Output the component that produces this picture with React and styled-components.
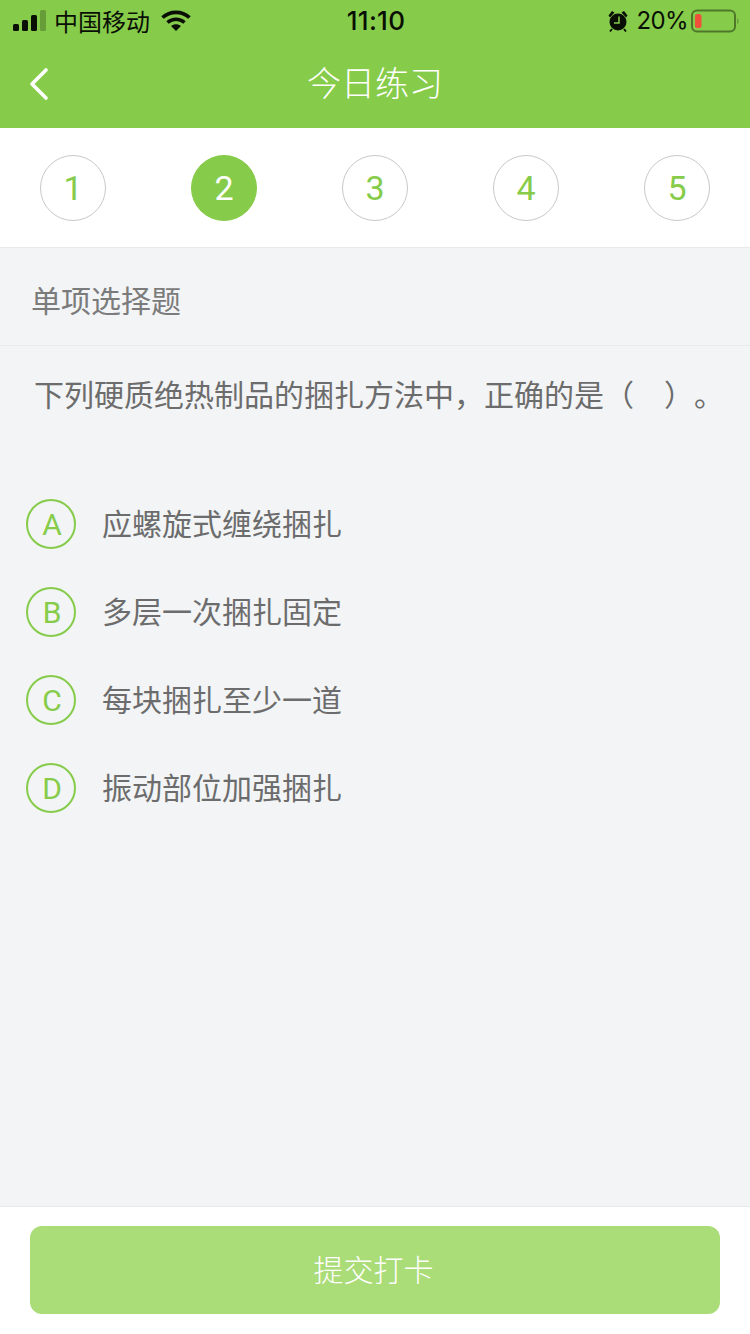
import React from "react";
import styled, { createGlobalStyle } from "styled-components";

const Global = createGlobalStyle`
  html, body { margin: 0; padding: 0; }
  body { background: #f2f4f6; font-family: "Liberation Sans", "Noto Sans CJK SC", sans-serif; text-spacing-trim: space-all; }
`;
const Page = styled.div`
  width: 750px; height: 1334px; display: flex; flex-direction: column; overflow: hidden; background: #f2f4f6;
`;
const Top = styled.header`
  height: 128px; flex: none; background: #86cc4a; display: flex; flex-direction: column;
`;
const Status = styled.div`
  height: 40px; display: grid; grid-template-columns: 1fr auto 1fr; align-items: center; padding: 0 11px 0 13px; color: #0a0f05;
`;
const StatusLeft = styled.div`display: flex; align-items: center;`;
const Carrier = styled.span`
  font: 24px "Noto Sans CJK SC", sans-serif; line-height: 40px; margin: 0 11px 0 8px;
`;
const Clock = styled.span`font: 500 26px "Inter", sans-serif; line-height: 42px; letter-spacing: 0.3px;`;
const StatusRight = styled.div`display: flex; align-items: center; justify-content: flex-end;`;
const Percent = styled.span`font: 24px "Inter", sans-serif; letter-spacing: -0.6px; margin: 0 3px 0 8px; line-height: 42px;`;
const NavBar = styled.div`
  flex: 1; display: flex; align-items: center; justify-content: center; position: relative;
`;
const Back = styled.svg`position: absolute; left: 29px; top: 27px;`;
const Title = styled.h1`
  margin: -5px 0 0; font: 300 34px "Noto Sans CJK SC", sans-serif; color: #fff; line-height: 88px;
`;
const Steps = styled.nav`
  height: 120px; flex: none; box-sizing: border-box; background: #fff; border-bottom: 1px solid #e8e9ea;
  display: flex; justify-content: space-between; align-items: flex-start; padding: 27px 40px 0;
`;
const Step = styled.div`
  width: 66px; height: 66px; box-sizing: border-box; border-radius: 50%;
  border: 1px solid ${p => (p.$active ? "#86cc4a" : "#c9c9c9")};
  background: ${p => (p.$active ? "#86cc4a" : "#fff")};
  color: ${p => (p.$active ? "#fff" : "#86cc4a")};
  display: flex; align-items: center; justify-content: center;
  font: 400 34px "Roboto", sans-serif;
`;
const TypeRow = styled.div`
  height: 98px; flex: none; box-sizing: border-box; padding: 4px 0 0 31px; border-bottom: 1px solid #e8eaec;
  display: flex; align-items: center; font: 30px "Noto Sans CJK SC", sans-serif; color: #7b7b7b;
`;
const Question = styled.p`
  margin: 0; padding: 24px 0 0 34px; height: 129px; flex: none; box-sizing: content-box;
  font: 30px/46px "Noto Sans CJK SC", sans-serif; color: #6c6c6c; white-space: nowrap;
`;
const Options = styled.ul`
  list-style: none; margin: 0; padding: 0 0 0 26px; display: flex; flex-direction: column; gap: 38px; flex: 1;
`;
const Option = styled.li`display: flex; align-items: center; height: 50px;`;
const Letter = styled.span`
  width: 50px; height: 50px; box-sizing: border-box; border: 2px solid #86cc4a; border-radius: 50%; padding-left: 2px;
  display: flex; align-items: center; justify-content: center; color: #86cc4a; font: 400 30px "Roboto", sans-serif;
`;
const OptionText = styled.span`
  margin-left: 26px; padding-bottom: 4px; font: 30px "Noto Sans CJK SC", sans-serif; color: #6c6c6c; line-height: 46px;
`;
const Footer = styled.footer`
  height: 128px; flex: none; box-sizing: border-box; background: #fff; border-top: 1px solid #e6e8ea;
  padding: 19px 30px 0;
`;
const Submit = styled.button`
  width: 690px; height: 88px; border: 0; border-radius: 12px; background: #aadc78; color: #fff;
  font: 300 30px "Noto Sans CJK SC", sans-serif; padding: 0 3px 4px 0;
`;

const Signal = () => (
  <svg width="33" height="22" viewBox="0 0 33 22" fill="#0a0f05">
    <rect x="0" y="14" width="6" height="7" rx="1.5" />
    <rect x="9" y="10" width="6" height="11" rx="1.5" />
    <rect x="18" y="5" width="6" height="16" rx="1.5" />
    <rect x="27" y="0" width="6" height="21" rx="1.5" opacity=".25" />
  </svg>
);
const Wifi = () => (
  <svg width="30" height="22" viewBox="0 0 30 22" fill="none" stroke="#0a0f05" strokeWidth="3.6">
    <path d="M1.5 7.5C9 .6 21 .6 28.5 7.5" />
    <path d="M6.5 12.5c5-4.4 12-4.4 17 0" />
    <path d="M15 21l-5-5c3-2.4 7-2.4 10 0z" fill="#0a0f05" stroke="none" />
  </svg>
);
const Alarm = () => (
  <svg width="20" height="22" viewBox="0 0 20 22">
    <circle cx="10" cy="12" r="8.5" fill="#0a0f05" />
    <path d="M.5 5.500l3.500-4.500 2.500 1.500-4.500 5zM19.500 5.500L16 1l-2.500 1.500 4.500 5z" fill="#0a0f05" />
    <path d="M4 19l-2 2.500M16 19l2 2.500" stroke="#0a0f05" strokeWidth="1.800" />
    <path d="M11 6.500V13H6" fill="none" stroke="#86cc4a" strokeWidth="1.500" />
  </svg>
);
const Battery = () => (
  <svg width="48" height="24" viewBox="0 0 48 24">
    <rect x="1" y="1.500" width="43" height="21" rx="5" fill="none" stroke="#0a0f05" strokeOpacity=".45" strokeWidth="2" />
    <rect x="4" y="5" width="6.500" height="14" rx="2.500" fill="#f0503a" />
    <path d="M46.500 9c1.200.5 1.200 5.500 0 6z" fill="#0a0f05" fillOpacity=".45" />
  </svg>
);

const options = [
  ["A", "应螺旋式缠绕捆扎"],
  ["B", "多层一次捆扎固定"],
  ["C", "每块捆扎至少一道"],
  ["D", "振动部位加强捆扎"],
];

export default function App() {
  return (
    <Page>
      <Global />
      <Top>
        <Status>
          <StatusLeft>
            <Signal />
            <Carrier>中国移动</Carrier>
            <Wifi />
          </StatusLeft>
          <Clock>11:10</Clock>
          <StatusRight>
            <Alarm />
            <Percent>20%</Percent>
            <Battery />
          </StatusRight>
        </Status>
        <NavBar>
          <Back width="20" height="34" viewBox="0 0 20 34" fill="none" stroke="#fff" strokeWidth="3.600" strokeLinecap="round" strokeLinejoin="round">
            <path d="M17 3L3 17l14 14" />
          </Back>
          <Title>今日练习</Title>
        </NavBar>
      </Top>
      <Steps>
        {[1, 2, 3, 4, 5].map(n => (
          <Step key={n} $active={n === 2}>{n}</Step>
        ))}
      </Steps>
      <TypeRow>单项选择题</TypeRow>
      <Question>下列硬质绝热制品的捆扎方法中，正确的是（　）。</Question>
      <Options>
        {options.map(([l, t]) => (
          <Option key={l}>
            <Letter>{l}</Letter>
            <OptionText>{t}</OptionText>
          </Option>
        ))}
      </Options>
      <Footer>
        <Submit>提交打卡</Submit>
      </Footer>
    </Page>
  );
}
